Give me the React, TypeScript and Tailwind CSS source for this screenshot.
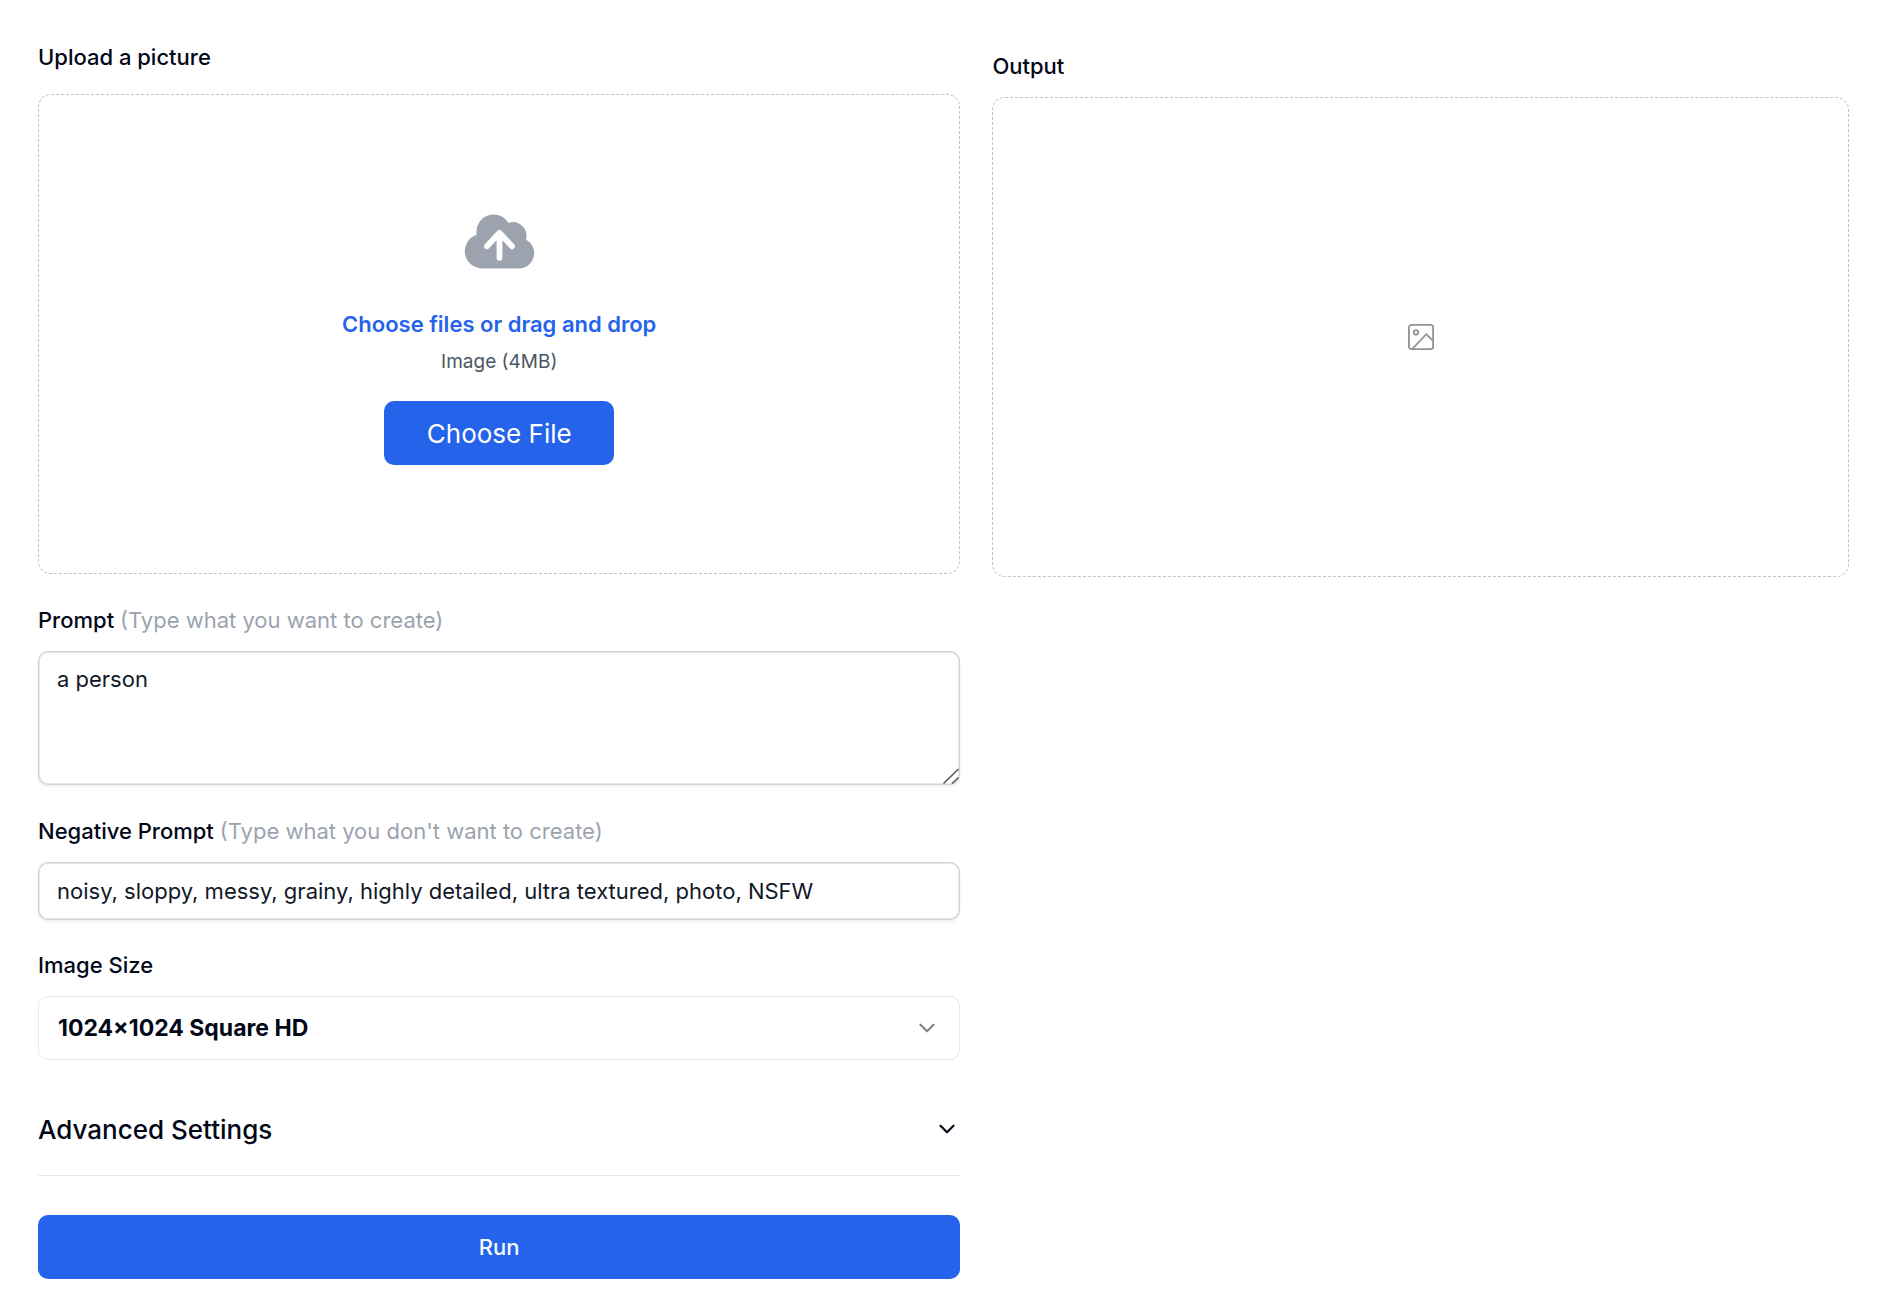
import { useState } from "react";
import { ChevronDown } from "lucide-react";

const labelClass = "block text-[22px] leading-8 font-medium";
const fieldClass =
  "block w-full rounded-[10px] bg-white px-[19px] text-[22px] leading-[38px] text-[#111827] outline-none shadow-[inset_0_0_0_1px_#d1d5db,inset_0_0_0_2px_#e5e7eb,0_2px_3px_rgba(0,0,0,0.06)]";

const sizes = [
  { value: "square_hd", label: "1024×1024 Square HD" },
  { value: "square", label: "512×512 Square" },
];

const CloudUploadIcon = () => (
  <svg viewBox="0 0 20 20" fill="currentColor" className="size-[77px] text-[#9ca3af]" aria-hidden="true">
    <path
      fillRule="evenodd"
      clipRule="evenodd"
      d="M5.5 17a4.5 4.5 0 0 1-1.44-8.765a4.5 4.5 0 0 1 8.302-3.046a3.5 3.5 0 0 1 4.504 4.272A4 4 0 0 1 15 17H5.5Zm3.75-2.75a.75.75 0 0 0 1.5 0V9.66l1.95 2.1a.75.75 0 1 0 1.1-1.02l-3.25-3.5a.75.75 0 0 0-1.1 0l-3.25 3.5a.75.75 0 1 0 1.1 1.02l1.95-2.1v4.59Z"
    />
  </svg>
);

const ImageIcon = () => (
  <svg viewBox="0 0 26 26" fill="none" stroke="currentColor" strokeWidth="1.8" className="size-[26px] text-[#8f9297]" aria-hidden="true">
    <rect x="0.9" y="0.9" width="24.2" height="24.2" rx="2.6" />
    <circle cx="8" cy="8.4" r="2.2" />
    <path d="M4.2 25 18.3 10.2 25 16.8" />
  </svg>
);

const ResizeGrip = () => (
  <svg
    viewBox="0 0 20 20"
    fill="none"
    stroke="#555555"
    strokeWidth="1.5"
    className="pointer-events-none absolute right-0 bottom-0 size-5"
    aria-hidden="true"
  >
    <path d="M3.5 18.5 18.5 4M12 18.5l6.5-6" />
  </svg>
);

const UploadBox = () => (
  <div className="mt-[21px] flex h-[480px] flex-col items-center justify-center rounded-[13px] border border-dashed border-[#bfc1c5]">
    <CloudUploadIcon />
    <p className="mt-7 text-[22px] leading-8 font-semibold text-[#2563eb]">Choose files or drag and drop</p>
    <p className="mt-1.5 text-[19px] leading-8 text-[#4b5563]">Image (4MB)</p>
    <button
      type="button"
      className="mt-[23px] flex h-16 w-[230px] items-center justify-center rounded-[10px] bg-[#2563eb] text-[26px] text-white"
    >
      Choose File
    </button>
  </div>
);

const App = () => {
  const [prompt, setPrompt] = useState("a person");
  const [negativePrompt, setNegativePrompt] = useState(
    "noisy, sloppy, messy, grainy, highly detailed, ultra textured, photo, NSFW"
  );
  const [size, setSize] = useState("square_hd");

  return (
    <main className="grid grid-cols-[14fr_13fr] gap-8 bg-white pt-[41px] pr-[51px] pb-6 pl-[38px] font-['Inter',sans-serif] text-[#020817]">
      <form onSubmit={(e) => e.preventDefault()}>
        <h2 className={labelClass}>Upload a picture</h2>
        <UploadBox />

        <div className="mt-[30px]">
          <label htmlFor="prompt" className={labelClass}>
            Prompt <span className="font-normal text-[#9ca3af]">(Type what you want to create)</span>
          </label>
          <div className="relative mt-[15px]">
            <textarea
              id="prompt"
              value={prompt}
              onChange={(e) => setPrompt(e.target.value)}
              className={`${fieldClass} h-[134px] resize-y py-[9px] [&::-webkit-resizer]:bg-transparent`}
            />
            <ResizeGrip />
          </div>
        </div>

        <div className="mt-[30px]">
          <label htmlFor="negative-prompt" className={labelClass}>
            Negative Prompt{" "}
            <span className="font-normal text-[#9ca3af]">(Type what you don't want to create)</span>
          </label>
          <input
            id="negative-prompt"
            type="text"
            value={negativePrompt}
            onChange={(e) => setNegativePrompt(e.target.value)}
            className={`${fieldClass} mt-[15px] h-[58px]`}
          />
        </div>

        <div className="mt-[29px]">
          <label htmlFor="image-size" className={labelClass}>
            Image Size
          </label>
          <div className="relative mt-[15px]">
            <select
              id="image-size"
              value={size}
              onChange={(e) => setSize(e.target.value)}
              className="block h-16 w-full appearance-none rounded-[10px] border border-[#e2e8f0] bg-white px-[19px] text-[23px] font-bold"
            >
              {sizes.map((s) => (
                <option key={s.value} value={s.value}>
                  {s.label}
                </option>
              ))}
            </select>
            <ChevronDown className="pointer-events-none absolute top-[19px] right-5 size-[26px] opacity-50" />
          </div>
        </div>

        <div className="mt-[23px] border-b border-[#e5e7eb]">
          <button
            type="button"
            aria-expanded="false"
            className="flex h-[92px] w-full items-center justify-between text-[26px] font-medium"
          >
            Advanced Settings
            <ChevronDown className="size-[26px]" />
          </button>
        </div>

        <button
          type="submit"
          className="mt-[39px] flex h-16 w-full items-center justify-center rounded-[10px] bg-[#2563eb] text-[22px] font-medium text-[#f8fafc]"
        >
          Run
        </button>
      </form>

      <section className="pt-[9px]">
        <h2 className={labelClass}>Output</h2>
        <div className="mt-[15px] flex h-[480px] items-center justify-center rounded-[13px] border border-dashed border-[#bfc1c5]">
          <ImageIcon />
        </div>
      </section>
    </main>
  );
};

export default App;
